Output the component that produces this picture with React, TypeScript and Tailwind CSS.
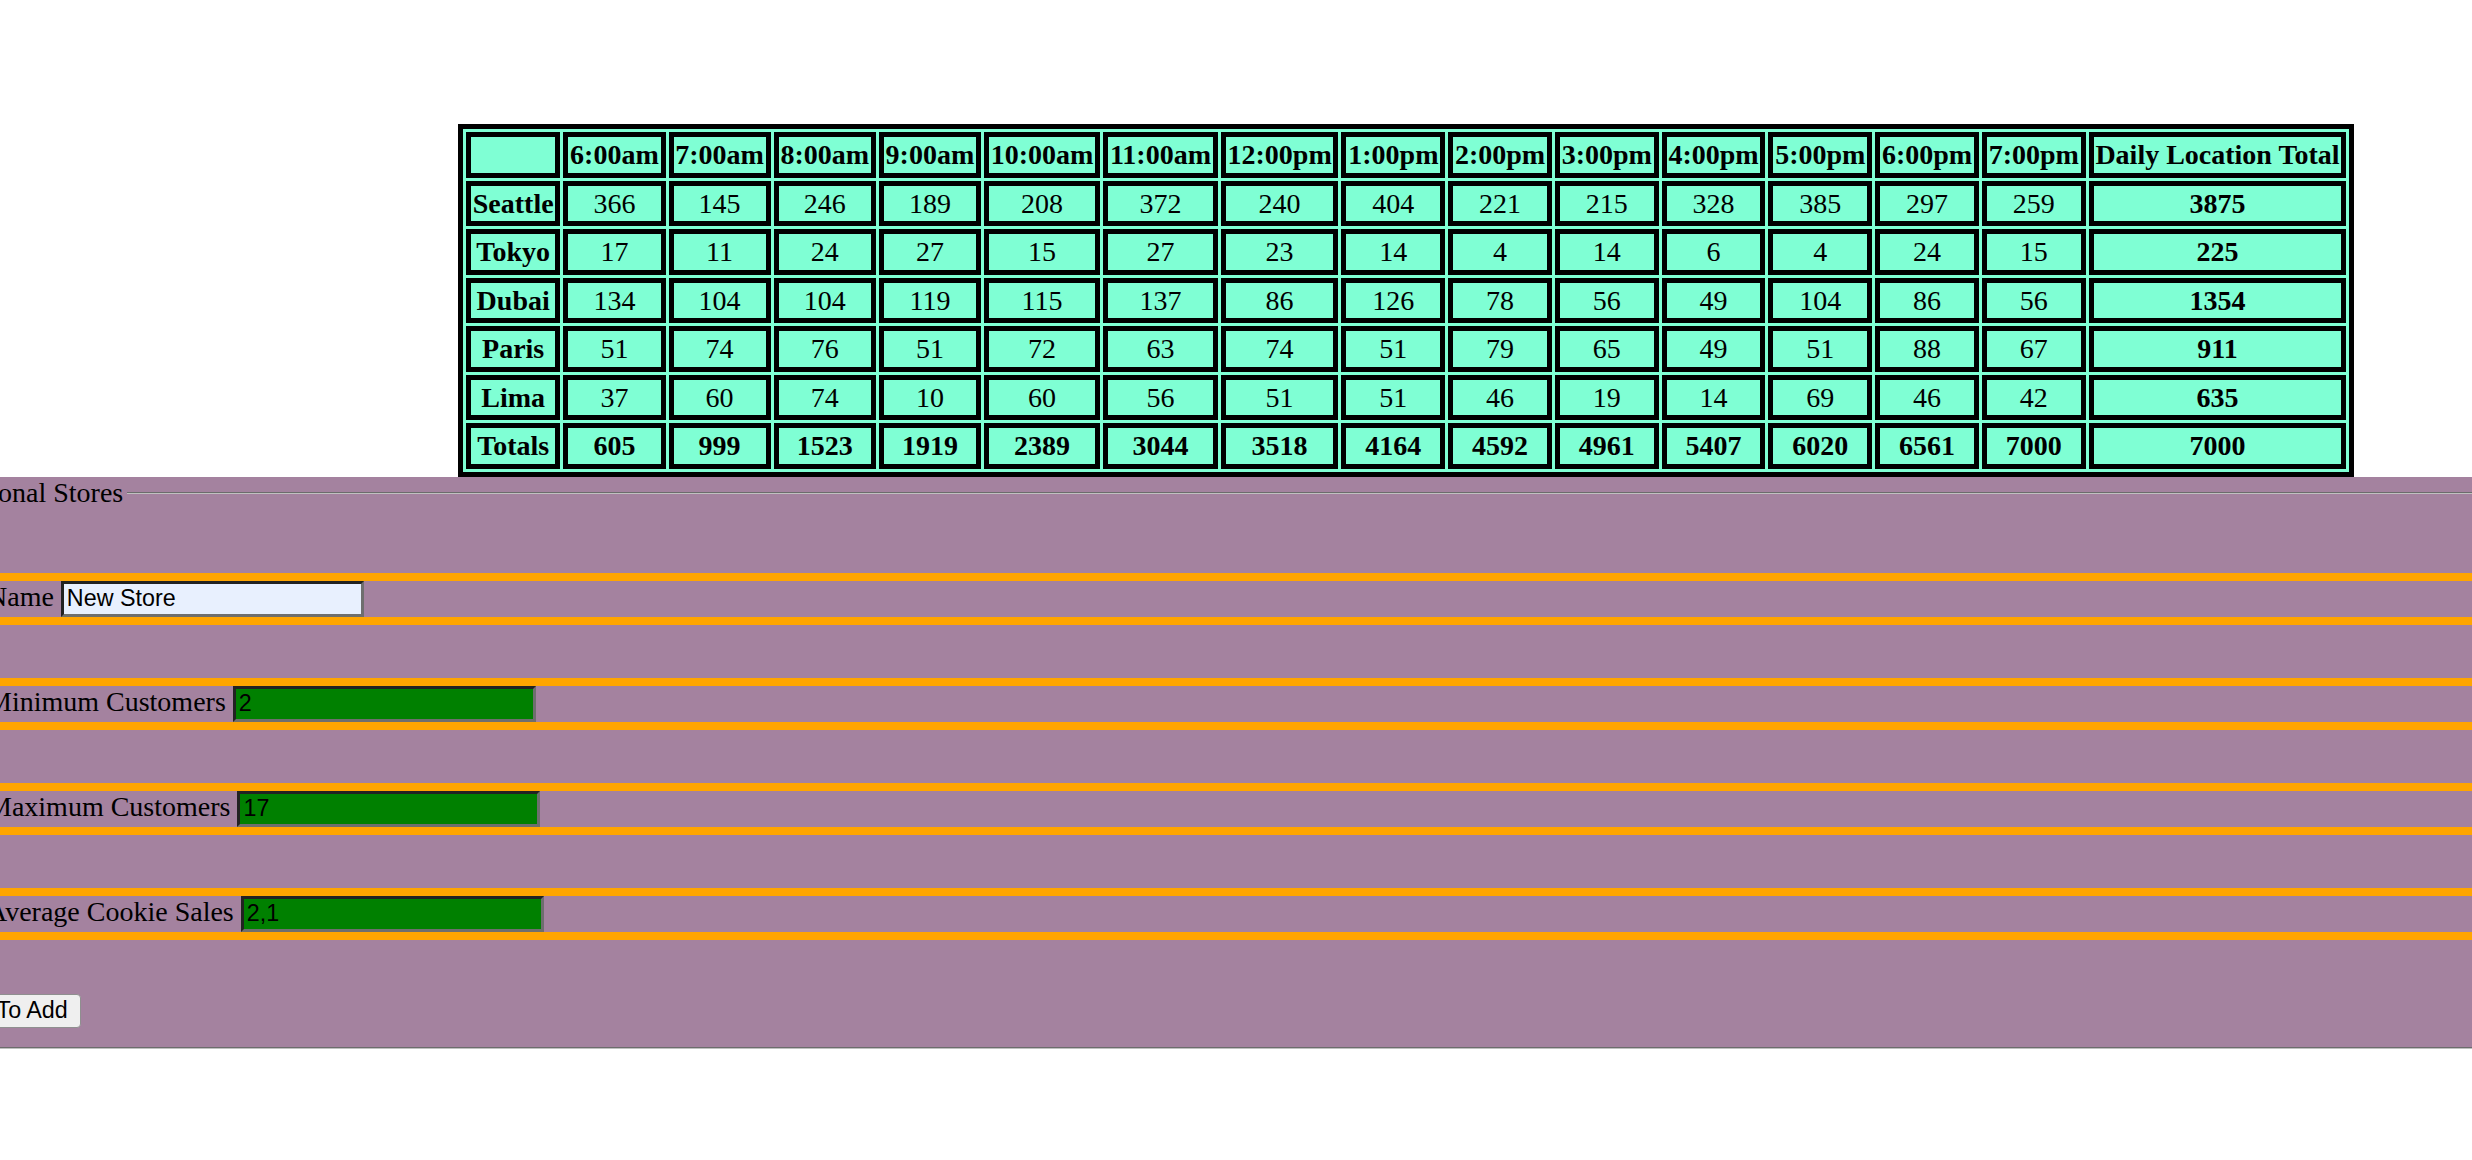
import React from "react";

const HOURS = [
  "6:00am", "7:00am", "8:00am", "9:00am", "10:00am", "11:00am", "12:00pm",
  "1:00pm", "2:00pm", "3:00pm", "4:00pm", "5:00pm", "6:00pm", "7:00pm",
];

const STORES = [
  { name: "Seattle", sales: [366, 145, 246, 189, 208, 372, 240, 404, 221, 215, 328, 385, 297, 259], total: 3875 },
  { name: "Tokyo", sales: [17, 11, 24, 27, 15, 27, 23, 14, 4, 14, 6, 4, 24, 15], total: 225 },
  { name: "Dubai", sales: [134, 104, 104, 119, 115, 137, 86, 126, 78, 56, 49, 104, 86, 56], total: 1354 },
  { name: "Paris", sales: [51, 74, 76, 51, 72, 63, 74, 51, 79, 65, 49, 51, 88, 67], total: 911 },
  { name: "Lima", sales: [37, 60, 74, 10, 60, 56, 51, 51, 46, 19, 14, 69, 46, 42], total: 635 },
];

const TOTALS = [605, 999, 1523, 1919, 2389, 3044, 3518, 4164, 4592, 4961, 5407, 6020, 6561, 7000];

const FIELDS = [
  { label: "Name", value: "New Store", autofilled: true },
  { label: "Minimum Customers", value: "2" },
  { label: "Maximum Customers", value: "17" },
  { label: "Average Cookie Sales", value: "2,1" },
];

const cell = "border-[5px] border-black px-[1.75px] py-[2px] text-center leading-[31.5px] whitespace-nowrap";

export default function App() {
  return (
    <div className="min-h-[1160px] w-full overflow-hidden bg-white font-['Liberation_Serif','Times_New_Roman',serif] text-[28px] text-black">
      <div className="pl-[458px] pt-[124px]">
        <table className="border-separate border-spacing-[3px] border-[5px] border-black bg-[#7fffd4]">
          <thead>
            <tr>
              <th className={cell}></th>
              {HOURS.map((h) => (
                <th key={h} className={`${cell} font-bold`}>{h}</th>
              ))}
              <th className={`${cell} font-bold`}>Daily Location Total</th>
            </tr>
          </thead>
          <tbody>
            {STORES.map((store) => (
              <tr key={store.name}>
                <th className={`${cell} font-bold`}>{store.name}</th>
                {store.sales.map((n, i) => (
                  <td key={i} className={cell}>{n}</td>
                ))}
                <td className={`${cell} font-bold`}>{store.total}</td>
              </tr>
            ))}
            <tr>
              <th className={`${cell} font-bold`}>Totals</th>
              {TOTALS.map((n, i) => (
                <td key={i} className={`${cell} font-bold`}>{n}</td>
              ))}
              <td className={`${cell} font-bold`}>7000</td>
            </tr>
          </tbody>
        </table>
      </div>

      <form className="ml-[-100px] w-[2800px] bg-[#a4829f]">
        <fieldset className="border-2 border-[#c0c0c0] [border-style:groove] px-[21px] pb-[17px]">
          <legend className="px-[3.5px] leading-[32px]">Additional Stores</legend>
          <div className="flex flex-col gap-[53px] pt-[64px]">
            {FIELDS.map((f) => (
              <label
                key={f.label}
                className="flex h-[52px] items-baseline border-y-8 border-[#ffa500] pl-[64px]"
              >
                <span className="leading-[32px]">{f.label}&nbsp;</span>
                <input
                  type="text"
                  defaultValue={f.value}
                  className={`h-[36px] w-[303px] border-[3px] border-t-[#222222] border-l-[#222222] border-b-[#6e6e6e] border-r-[#6e6e6e] px-[3px] font-['Liberation_Sans',Arial,sans-serif] text-[23.3px] text-black outline-none ${
                    f.autofilled ? "bg-[#e8f0fe]" : "bg-[#008000]"
                  }`}
                />
              </label>
            ))}
          </div>
          <button
            type="button"
            className="mt-[54px] ml-[4px] h-[34px] rounded-[4px] border border-[#8f8f8f] bg-[#efefef] px-[12px] font-['Liberation_Sans',Arial,sans-serif] text-[23.3px] leading-none text-black"
          >
            Click To Add
          </button>
        </fieldset>
      </form>
    </div>
  );
}
